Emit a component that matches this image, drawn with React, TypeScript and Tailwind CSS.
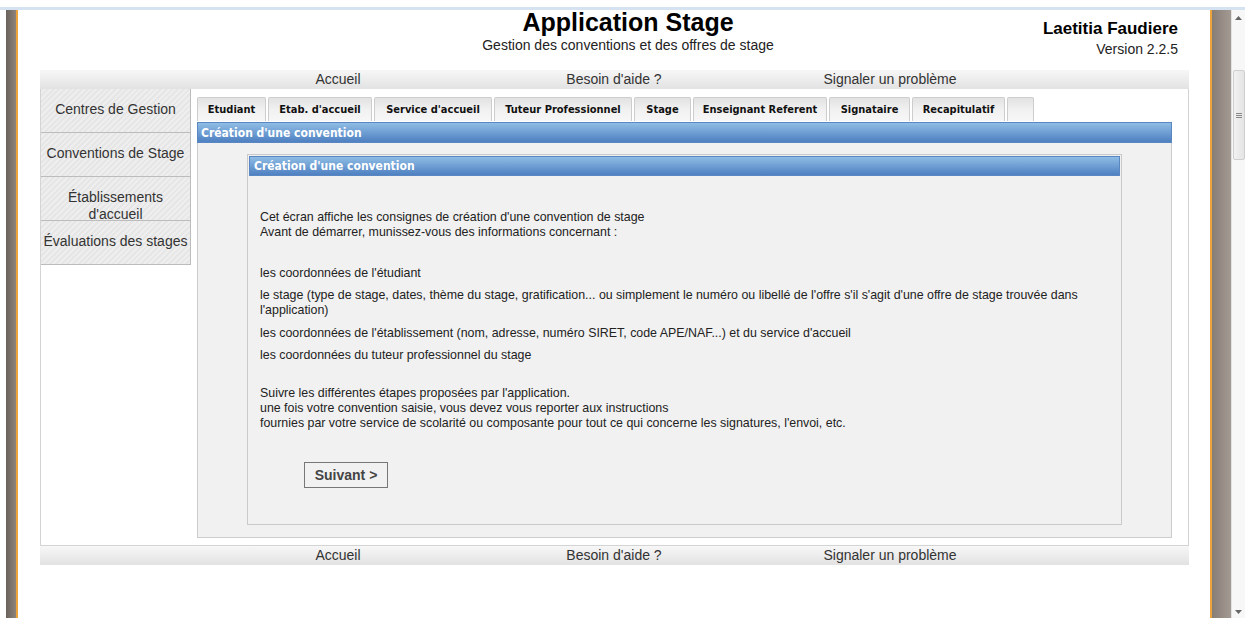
import type { ReactNode } from 'react'

const TABS = [
  { label: 'Etudiant', w: 'w-[69px]' },
  { label: "Etab. d'accueil", w: 'w-[104px]' },
  { label: "Service d'accueil", w: 'w-[118px]' },
  { label: 'Tuteur Professionnel', w: 'w-[138px]' },
  { label: 'Stage', w: 'w-[57px]' },
  { label: 'Enseignant Referent', w: 'w-[134px]' },
  { label: 'Signataire', w: 'w-[81px]' },
  { label: 'Recapitulatif', w: 'w-[93px]' },
  { label: '', w: 'w-[27px]' },
]

const MENU = [
  'Centres de Gestion',
  'Conventions de Stage',
  'Établissements d\'accueil',
  'Évaluations des stages',
]

const TAHOMA = "font-['DejaVu_Sans_Condensed','DejaVu_Sans',sans-serif]"

function NavBar() {
  return (
    <div className="flex h-[19px] bg-gradient-to-b from-[#f7f7f7] to-[#e2e2e2] pl-[160px] text-[14px] leading-[19px] text-[#333]">
      <a className="w-[276px] text-center">Accueil</a>
      <a className="w-[276px] text-center">Besoin d'aide ?</a>
      <a className="w-[276px] text-center">Signaler un problème</a>
    </div>
  )
}

function BlueBar({ children, className = '' }: { children: ReactNode; className?: string }) {
  return (
    <div
      className={`border border-[#5a87c1] bg-gradient-to-b from-[#8fbde5] to-[#4f80c1] text-[12px] font-bold text-white ${TAHOMA} ${className}`}
    >
      {children}
    </div>
  )
}

function Scrollbar() {
  return (
    <div className="flex w-[14px] flex-col items-center border-l border-[#e2e2e2] bg-[#f7f7f7]">
      <svg width="7" height="4" viewBox="0 0 7 4" className="mt-[6px]">
        <path d="M0 4 L3.5 0 L7 4 Z" fill="#666" />
      </svg>
      <div className="mt-[50px] flex h-[90px] w-[12px] items-center justify-center rounded-[2px] border border-[#cfcfcf] bg-gradient-to-r from-[#f2f2f2] to-[#e4e4e4]">
        <div className="flex w-[6px] flex-col gap-[1px]">
          <div className="h-px bg-[#888]" />
          <div className="h-px bg-[#888]" />
          <div className="h-px bg-[#888]" />
        </div>
      </div>
      <div className="flex-1" />
      <svg width="7" height="4" viewBox="0 0 7 4" className="mb-[4px]">
        <path d="M0 0 L3.5 4 L7 0 Z" fill="#666" />
      </svg>
    </div>
  )
}

export default function App() {
  return (
    <div className="flex h-[618px] w-[1245px] flex-col overflow-hidden bg-white font-['Liberation_Sans',Arial,sans-serif] text-[#222]">
      <div className="h-[10px] shrink-0 pt-[7px]">
        <div className="h-[3px] bg-[#d4e2f1]" />
      </div>

      <div className="flex min-h-0 flex-1">
        <div className="w-[6px]" />
        <div className="w-[10px] bg-gradient-to-r from-[#6a625b] to-[#8e847c]" />
        <div className="w-[2px] bg-[#eda43a]" />

        <main className="w-[1192px]">
          <div className="ml-[22px] w-[1149px]">
            {/* en-tête */}
            <div className="flex h-[60px]">
              <div className="w-[388px]" />
              <div className="w-[400px] pt-[1px] text-center text-black">
                <h1 className="text-[25px] font-bold leading-[22px]">Application Stage</h1>
                <p className="mt-[4px] text-[14px] leading-[16px] text-[#222]">
                  Gestion des conventions et des offres de stage
                </p>
              </div>
              <div className="flex-1 pr-[11px] pt-[9px] text-right text-black">
                <div className="text-[17px] font-bold leading-[20px]">Laetitia Faudiere</div>
                <div className="mt-[2px] text-[14px] leading-[16px] text-[#222]">Version 2.2.5</div>
              </div>
            </div>

            <NavBar />

            <div className="flex h-[457px] border-x border-b border-[#d4d4d4]">
              {/* menu latéral */}
              <div className="w-[150px]">
                {MENU.map((item) => (
                  <div
                    key={item}
                    className="h-[44px] overflow-hidden border-b border-r border-[#bcbcbc] bg-[repeating-linear-gradient(135deg,#e6e6e6_0px,#e6e6e6_2px,#eeeeee_2px,#eeeeee_4px)] px-[2px] pt-[12px] text-center text-[14px] leading-[17px] text-[#333]"
                  >
                    {item}
                  </div>
                ))}
              </div>

              <div className="ml-[6px] flex w-[975px] flex-col pt-[8px]">
                <div className="flex h-[24px] gap-[2px]">
                  {TABS.map((t, i) => (
                    <div
                      key={i}
                      className={`${t.w} rounded-t-[2px] border border-b-0 border-[#cdcdcd] bg-gradient-to-b from-[#e2e2e2] via-[#f1f1f1] to-[#f7f7f7] text-center text-[11px] font-bold leading-[23px] text-[#111] ${TAHOMA}`}
                    >
                      {t.label}
                    </div>
                  ))}
                </div>

                <BlueBar className="mt-[1px] h-[21px] pl-[3px] leading-[20px]">Création d'une convention</BlueBar>

                <div className="h-[395px] border-x border-b border-[#cccccc] bg-[#f1f1f1] pl-[49px] pt-[11px]">
                  <div className="h-[371px] w-[875px] border border-[#cacaca] bg-[#f1f1f1] p-[1px]">
                    <BlueBar className="h-[20px] pl-[4px] leading-[19px]">Création d'une convention</BlueBar>

                    <div className="pl-[11px] pt-[34px] text-[12.4px] leading-[15px] text-[#222]">
                      <p>
                        Cet écran affiche les consignes de création d'une convention de stage
                        <br />
                        Avant de démarrer, munissez-vous des informations concernant :
                      </p>

                      <ul className="mt-[26px] flex flex-col gap-[7px] pr-[20px]">
                        <li>les coordonnées de l'étudiant</li>
                        <li>
                          le stage (type de stage, dates, thème du stage, gratification... ou simplement le numéro ou
                          libellé de l'offre s'il s'agit d'une offre de stage trouvée dans l'application)
                        </li>
                        <li className="mt-[1px]">
                          les coordonnées de l'établissement (nom, adresse, numéro SIRET, code APE/NAF...) et du service
                          d'accueil
                        </li>
                        <li>les coordonnées du tuteur professionnel du stage</li>
                      </ul>

                      <p className="mt-[23px]">
                        Suivre les différentes étapes proposées par l'application.
                        <br />
                        une fois votre convention saisie, vous devez vous reporter aux instructions
                        <br />
                        fournies par votre service de scolarité ou composante pour tout ce qui concerne les signatures,
                        l'envoi, etc.
                      </p>

                      <button className="ml-[44px] mt-[31px] h-[26px] w-[84px] border border-[#777] bg-[#f1f1f1] text-[14px] font-bold text-[#444]">
                        Suivant &gt;
                      </button>
                    </div>
                  </div>
                </div>
              </div>
            </div>

            <NavBar />
          </div>
        </main>

        <div className="w-[2px] bg-[#eda43a]" />
        <div className="w-[19px] bg-gradient-to-r from-[#887e76] to-[#a39a93]" />
        <Scrollbar />
      </div>
    </div>
  )
}
